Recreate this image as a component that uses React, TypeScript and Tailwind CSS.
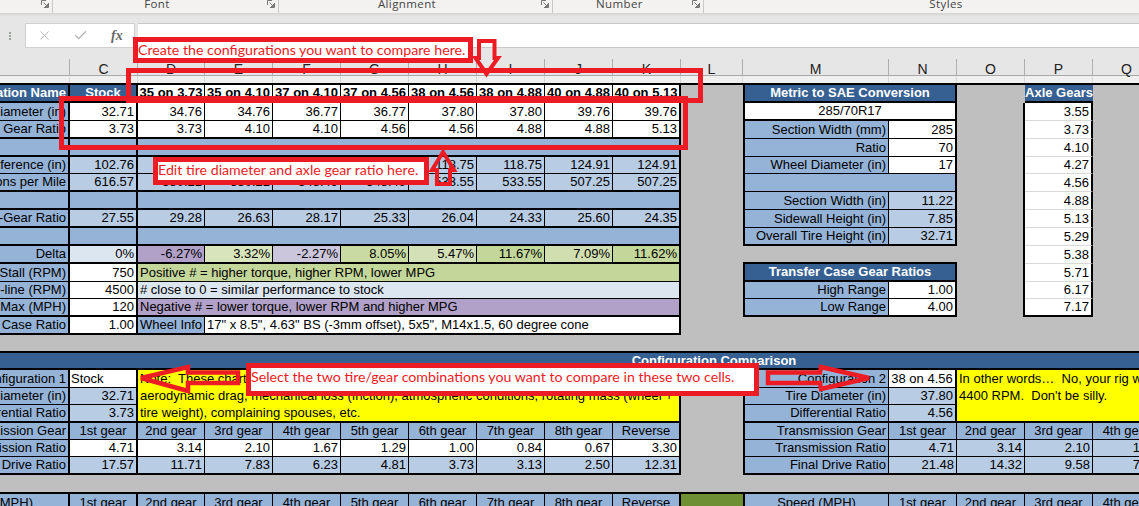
import React from "react";
import { X, Check } from "lucide-react";

type C = { t?: React.ReactNode; c?: string };

const COLS = "grid grid-cols-[70px_68px_67px_68px_68px_68px_68px_68px_68px_68px_62px_146px_68px_68px_68px_68px_267px]";
const ROWS = "grid-rows-[18px_18px_18px_18px_17px_18px_18px_18px_18px_18px_18px_17px_18px_18px_16px_19px_18px_17px_18px_17px_17px_18px_17px_20px]";

const BLUE = "bg-[#95b3d7]";
const LIGHT = "bg-[#b8cce4]";
const WHITE = "bg-white";
const TH = "border-b-2";
const TN = "border-b";
const R = "justify-end pr-[2px]";
const M = "justify-center";

const E: C = {};

function left(label: string, vals: string[], bg: string, bot: string, first?: string): C[] {
  const out: C[] = [{ t: label, c: `${BLUE} ${R} border-r-2 ${bot}` }];
  vals.forEach((v, i) => {
    const edge = i === 0 || i === 8 ? "border-r-2" : "border-r";
    out.push({ t: v, c: `${i === 0 && first ? first : bg} ${R} ${edge} ${bot}` });
  });
  return out;
}

function blank(label: string): C[] {
  return [
    { t: label, c: `${BLUE} ${R} border-r-2 ${TH}` },
    { c: `${BLUE} border-r-2 ${TH}` },
    { c: `${BLUE} col-span-8 border-r-2 ${TH}` },
  ];
}

function pair(label: string, val: string, bg: string, bot: string): C[] {
  return [
    { t: label, c: `${BLUE} ${R} border-l-2 border-r ${bot}` },
    { t: val, c: `${bg} ${R} border-r-2 ${bot}` },
  ];
}

function axle(v: string, last?: boolean): C[] {
  return [
    { c: "border-r-2" },
    { t: v, c: `${WHITE} ${R} border-r-2 ${last ? "border-b-2" : "border-b border-b-[#d9d9d9]"}` },
    { c: "col-span-2" },
  ];
}

function gears(label: string, names: string[], bg: string, align: string, bot: string, labelAlign: string = R): C[] {
  return [
    { t: label, c: `${BLUE} ${labelAlign} border-r-2 ${bot}` },
    ...names.map((n, i) => ({
      t: n,
      c: `${bg} ${align} ${i === 0 || i === names.length - 1 ? "border-r-2" : "border-r"} ${bot}`,
    })),
  ];
}

function rgears(label: string, names: string[], bg: string, align: string, bot: string): C[] {
  return [
    { t: label, c: `${BLUE} ${R} border-l-2 border-r ${bot}` },
    ...names.map((n) => ({ t: n, c: `${bg} ${align} border-r ${bot}` })),
    E,
  ];
}

const GEARS = ["1st gear", "2nd gear", "3rd gear", "4th gear", "5th gear", "6th gear", "7th gear", "8th gear", "Reverse"];
const RG = ["1st gear", "2nd gear", "3rd gear", "4th gear"];
const HEAD = "font-bold text-white bg-[#366092]";

const cells: C[] = [
  // row 1
  { t: "Configuration Name", c: `${HEAD} ${R} border-r-2 ${TH}` },
  { t: "Stock", c: `${HEAD} ${M} border-r-2 ${TH}` },
  ...["35 on 3.73", "35 on 4.10", "37 on 4.10", "37 on 4.56", "38 on 4.56", "38 on 4.88", "40 on 4.88"].map((t) => ({
    t,
    c: `${WHITE} font-bold ${M} border-r ${TH}`,
  })),
  { t: "40 on 5.13", c: `${WHITE} font-bold ${M} border-r-2 ${TH}` },
  E,
  { t: "Metric to SAE Conversion", c: `${HEAD} ${M} col-span-2 border-l-2 border-r-2 ${TH}` },
  E,
  { t: "Axle Gears", c: `${HEAD} ${M} ${TH}` },
  { c: "col-span-2" },
  // row 2
  ...left("Tire Diameter (in)", ["32.71", "34.76", "34.76", "36.77", "36.77", "37.80", "37.80", "39.76", "39.76"], WHITE, TN),
  E,
  { t: "285/70R17", c: `${WHITE} ${M} col-span-2 border-l-2 border-r-2 ${TH}` },
  ...axle("3.55"),
  // row 3
  ...left("Axle Gear Ratio", ["3.73", "3.73", "4.10", "4.10", "4.56", "4.56", "4.88", "4.88", "5.13"], WHITE, TH),
  E,
  ...pair("Section Width (mm)", "285", WHITE, TN),
  ...axle("3.73"),
  // row 4
  ...blank(""),
  E,
  ...pair("Ratio", "70", WHITE, TN),
  ...axle("4.10"),
  // row 5
  ...left("Tire Circumference (in)", ["102.76", "109.20", "109.20", "115.51", "115.51", "118.75", "118.75", "124.91", "124.91"], LIGHT, TN),
  E,
  ...pair("Wheel Diameter (in)", "17", WHITE, TN),
  ...axle("4.27"),
  // row 6
  ...left("Revolutions per Mile", ["616.57", "580.21", "580.21", "548.49", "548.49", "533.55", "533.55", "507.25", "507.25"], LIGHT, TH),
  E,
  { c: `${BLUE} col-span-2 border-l-2 border-r-2 ${TN}` },
  ...axle("4.56"),
  // row 7
  ...blank(""),
  E,
  ...pair("Section Width (in)", "11.22", LIGHT, TN),
  ...axle("4.88"),
  // row 8
  ...left("Axle-Gear Ratio", ["27.55", "29.28", "26.63", "28.17", "25.33", "26.04", "24.33", "25.60", "24.35"], LIGHT, TH),
  E,
  ...pair("Sidewall Height (in)", "7.85", LIGHT, TN),
  ...axle("5.13"),
  // row 9
  ...blank(""),
  E,
  ...pair("Overall Tire Height (in)", "32.71", LIGHT, TH),
  ...axle("5.29"),
  // row 10
  { t: "Delta", c: `${BLUE} ${R} border-r-2 ${TH}` },
  { t: "0%", c: `bg-[#dce6f1] ${R} border-r-2 ${TH}` },
  { t: "-6.27%", c: `bg-[#b1a0c7] ${R} border-r ${TH}` },
  { t: "3.32%", c: `bg-[#d8e4bc] ${R} border-r ${TH}` },
  { t: "-2.27%", c: `bg-[#ccc6dc] ${R} border-r ${TH}` },
  { t: "8.05%", c: `bg-[#c9dba3] ${R} border-r ${TH}` },
  { t: "5.47%", c: `bg-[#d4e0b8] ${R} border-r ${TH}` },
  { t: "11.67%", c: `bg-[#c4d79b] ${R} border-r ${TH}` },
  { t: "7.09%", c: `bg-[#d0deb0] ${R} border-r ${TH}` },
  { t: "11.62%", c: `bg-[#c4d79b] ${R} border-r-2 ${TH}` },
  E,
  { c: `col-span-2 ${TH}` },
  ...axle("5.38"),
  // row 11
  { t: "Converter Stall (RPM)", c: `${BLUE} ${R} border-r-2 ${TN}` },
  { t: "750", c: `${WHITE} ${R} border-r-2 ${TN}` },
  { t: "Positive # = higher torque, higher RPM, lower MPG", c: `bg-[#c4d79b] col-span-8 pl-[2px] border-r-2 ${TN}` },
  E,
  { t: "Transfer Case Gear Ratios", c: `${HEAD} ${M} col-span-2 border-l-2 border-r-2 ${TH}` },
  ...axle("5.71"),
  // row 12
  { t: "Engine Red-line (RPM)", c: `${BLUE} ${R} border-r-2 ${TN}` },
  { t: "4500", c: `${WHITE} ${R} border-r-2 ${TN}` },
  { t: "# close to 0 = similar performance to stock", c: `bg-[#dce6f1] col-span-8 pl-[2px] border-r-2 ${TN}` },
  E,
  ...pair("High Range", "1.00", WHITE, TN),
  ...axle("6.17"),
  // row 13
  { t: "Speed Max (MPH)", c: `${BLUE} ${R} border-r-2 ${TH}` },
  { t: "120", c: `${WHITE} ${R} border-r-2 ${TH}` },
  { t: "Negative # = lower torque, lower RPM and higher MPG", c: `bg-[#b1a0c7] col-span-8 pl-[2px] border-r-2 ${TH}` },
  E,
  ...pair("Low Range", "4.00", WHITE, TH),
  ...axle("7.17", true),
  // row 14
  { t: "Transfer Case Ratio", c: `${BLUE} ${R} border-r-2 ${TH}` },
  { t: "1.00", c: `${WHITE} ${R} border-r-2 ${TH}` },
  { t: "Wheel Info", c: `${BLUE} ${M} border-r ${TH}` },
  { t: '17" x 8.5", 4.63" BS (-3mm offset), 5x5", M14x1.5, 60 degree cone', c: `${WHITE} col-span-7 pl-[2px] border-r-2 ${TH}` },
  { c: "col-span-7" },
  // gap
  { c: "col-span-17" },
  // comparison header
  { t: "Configuration Comparison", c: `${HEAD} ${M} col-span-17 border-t-2 ${TH}` },
  // row 17
  { t: "Configuration 1", c: `${BLUE} ${R} border-r-2 ${TN}` },
  { t: "Stock", c: `${WHITE} pl-[1px] border-r-2 ${TN}` },
  {
    t: (
      <span className="leading-[17px]">
        {"Note:  These charts do not account for"}
        <br />
        {"aerodynamic drag, mechanical loss (friction), atmospheric conditions, rotating mass (wheel +"}
        <br />
        {"tire weight), complaining spouses, etc."}
      </span>
    ),
    c: `bg-[#ffff00] col-span-8 row-span-3 pl-[2px] border-r-2 ${TH} whitespace-pre items-start`,
  },
  E,
  { t: "Configuration 2", c: `${BLUE} ${R} border-l-2 border-r ${TN}` },
  { t: "38 on 4.56", c: `${WHITE} ${M} border-r-2 ${TN}` },
  {
    t: (
      <span className="leading-[17px]">
        {"In other words…  No, your rig will not do 200 MPH at"}
        <br />
        {"4400 RPM.  Don't be silly."}
      </span>
    ),
    c: `bg-[#ffff00] col-span-4 row-span-3 pl-[2px] ${TH} whitespace-pre items-start`,
  },
  // row 18
  { t: "Tire Diameter (in)", c: `${BLUE} ${R} border-r-2 ${TN}` },
  { t: "32.71", c: `${LIGHT} ${R} border-r-2 ${TN}` },
  E,
  { t: "Tire Diameter (in)", c: `${BLUE} ${R} border-l-2 border-r ${TN}` },
  { t: "37.80", c: `${LIGHT} ${R} border-r-2 ${TN}` },
  // row 19
  { t: "Differential Ratio", c: `${BLUE} ${R} border-r-2 ${TH}` },
  { t: "3.73", c: `${LIGHT} ${R} border-r-2 ${TH}` },
  E,
  { t: "Differential Ratio", c: `${BLUE} ${R} border-l-2 border-r ${TH}` },
  { t: "4.56", c: `${LIGHT} ${R} border-r-2 ${TH}` },
  // row 20
  ...gears("Transmission Gear", GEARS, BLUE, M, TN),
  E,
  ...rgears("Transmission Gear", RG, BLUE, M, TN),
  // row 21
  ...gears("Transmission Ratio", ["4.71", "3.14", "2.10", "1.67", "1.29", "1.00", "0.84", "0.67", "3.30"], WHITE, R, TN),
  E,
  ...rgears("Transmission Ratio", ["4.71", "3.14", "2.10", "1.67"], LIGHT, R, TN),
  // row 22
  ...gears("Final Drive Ratio", ["17.57", "11.71", "7.83", "6.23", "4.81", "3.73", "3.13", "2.50", "12.31"], LIGHT, R, TH),
  E,
  ...rgears("Final Drive Ratio", ["21.48", "14.32", "9.58", "7.62"], LIGHT, R, TH),
  // gap
  { c: "col-span-17" },
  // row 24
  ...gears("Speed (MPH)", GEARS, BLUE, M, "border-t-2", "justify-end pr-[35px]"),
  { c: "bg-[#6f8f33] border-t-2" },
  { t: "Speed (MPH)", c: `${BLUE} ${M} border-l-2 border-r border-t-2` },
  ...RG.map((t) => ({ t, c: `${BLUE} ${M} border-r border-t-2` })),
  E,
];

const LETTERS = ["", "C", "D", "E", "F", "G", "H", "I", "J", "K", "L", "M", "N", "O", "P", "Q", ""];

function Launcher() {
  return (
    <svg viewBox="0 0 8 8" className="w-[8px] h-[8px]" fill="none" stroke="#777" strokeWidth="1">
      <path d="M0.5 5V0.5H5" />
      <path d="M7.5 3V7.5H3" />
      <path d="M2.5 2.5L6.5 6.5M6.5 4V6.5H4" />
    </svg>
  );
}

function Group({ w, label }: { w: string; label: string }) {
  return (
    <div className={`${w} shrink-0 h-full flex items-start border-r border-[#c8c8c8]`}>
      <span className="flex-1 flex justify-center pr-[6px] -mt-[5px] text-[11.5px] tracking-[0.4px] text-[#444]">{label}</span>
      <div className="pr-[3px]">
        <Launcher />
      </div>
    </div>
  );
}

const CALLOUT = "border-[5px] border-[#ed1c24] bg-white text-[#ed1c24] text-[14.2px] flex whitespace-nowrap";

export default function App() {
  return (
    <div className="relative w-[1139px] h-[506px] overflow-hidden bg-[#bfbfbf] text-black" style={{ fontFamily: '"Liberation Sans", Arial, sans-serif' }}>
      {/* ribbon */}
      <div className="h-[13px] bg-[#f3f2f1] flex overflow-hidden" style={{ fontFamily: '"Open Sans", sans-serif' }}>
        <div className="w-[53px] shrink-0 h-full flex justify-end items-start border-r border-[#c8c8c8] pr-[3px]">
          <Launcher />
        </div>
        <Group w="w-[226px]" label="Font" />
        <Group w="w-[274px]" label="Alignment" />
        <Group w="w-[151px]" label="Number" />
        <div className="w-[484px] shrink-0 flex justify-center -mt-[5px] text-[11.5px] tracking-[0.4px] text-[#444]">Styles</div>
      </div>
      <div className="h-[4px] bg-gradient-to-b from-[#d4d4d4] to-[#e8e8e8]" />
      <div className="h-[6px] bg-[#e6e6e6]" />
      {/* formula bar */}
      <div className="h-[25px] bg-[#e6e6e6] flex">
        <div className="w-[25px] flex flex-col items-center justify-center gap-[1px] pr-[5px]">
          <div className="w-[2px] h-[2px] bg-[#9aa8a0]" />
          <div className="w-[2px] h-[2px] bg-[#9aa8a0]" />
          <div className="w-[2px] h-[2px] bg-[#9aa8a0]" />
        </div>
        <div className="w-[110px] bg-white border border-[#d0d0d0] flex items-center pl-[11px]">
          <X size={15} strokeWidth={1.5} color="#b4b4b4" />
          <div className="w-[21px]" />
          <Check size={15} strokeWidth={2.2} color="#b4b4b4" />
          <span className="ml-[23px] italic font-bold text-[#666] text-[14px] leading-none" style={{ fontFamily: '"Liberation Serif", serif' }}>fx</span>
        </div>
        <div className="w-[3px]" />
        <div className="flex-1 bg-white border-t border-b border-[#c8c8c8]" />
      </div>
      <div className="h-[11px] bg-[#e6e6e6]" />
      {/* column headings */}
      <div className={`${COLS} h-[16px] bg-[#e6e6e6]`}>
        {LETTERS.map((l, i) => (
          <div key={i} className="flex items-center justify-center pb-[3px] text-[14px] text-[#222] border-r border-[#aeaeae]">
            {l}
          </div>
        ))}
      </div>
      <div className={`${COLS} h-[8px] bg-[#f0f0f0] border-t border-[#a8a8a8]`}>
        {LETTERS.map((_, i) => (
          <div key={i} className="border-r border-[#d8d8d8]" />
        ))}
      </div>
      {/* sheet */}
      <div className={`${COLS} ${ROWS} border-t-2 border-black text-[13px]`}>
        {cells.map((x, i) => (
          <div key={i} className={`flex items-center whitespace-nowrap border-black min-w-0 ${x.c ?? ""}`}>
            {x.t}
          </div>
        ))}
      </div>

      {/* annotations */}
      <div className={`absolute left-[133px] top-[37px] w-[340px] h-[26px] items-center ${CALLOUT}`} style={{ fontFamily: "Lato, sans-serif" }}>
        Create the configurations you want to compare here.
      </div>
      <div className="absolute left-[126px] top-[68px] w-[577px] h-[35px] border-[5px] border-[#ed1c24]" />
      <div className="absolute left-[59px] top-[96px] w-[629px] h-[54px] border-[5px] border-[#ed1c24]" />
      <div className={`absolute left-[153px] top-[157px] w-[276px] h-[28px] items-start leading-[16px] ${CALLOUT}`} style={{ fontFamily: "Lato, sans-serif" }}>
        Edit tire diameter and axle gear ratio here.
      </div>
      <div className={`absolute left-[246px] top-[363px] w-[513px] h-[33px] items-start leading-[18px] ${CALLOUT}`} style={{ fontFamily: "Lato, sans-serif" }}>
        Select the two tire/gear combinations you want to compare in these two cells.
      </div>
      <svg className="absolute left-0 top-0 w-[1139px] h-[506px] pointer-events-none" viewBox="0 0 1139 506" fill="none" stroke="#ed1c24" strokeWidth="4.5" strokeLinejoin="miter">
        <polygon points="479,41 494.5,41 494.5,58 498,58 486.5,74 475.5,58 479,58" strokeWidth="4" />
        <polygon points="437,184 450,184 450,170 454,170 443,152 432,170 437,170" strokeWidth="4" />
        <polygon points="141,378 188,367 188,372.5 238,372.5 238,383 188,383 188,391" />
        <polygon points="768,372.5 820,372.5 821,367 869,378 821,389 820,383 768,383" />
      </svg>
    </div>
  );
}
